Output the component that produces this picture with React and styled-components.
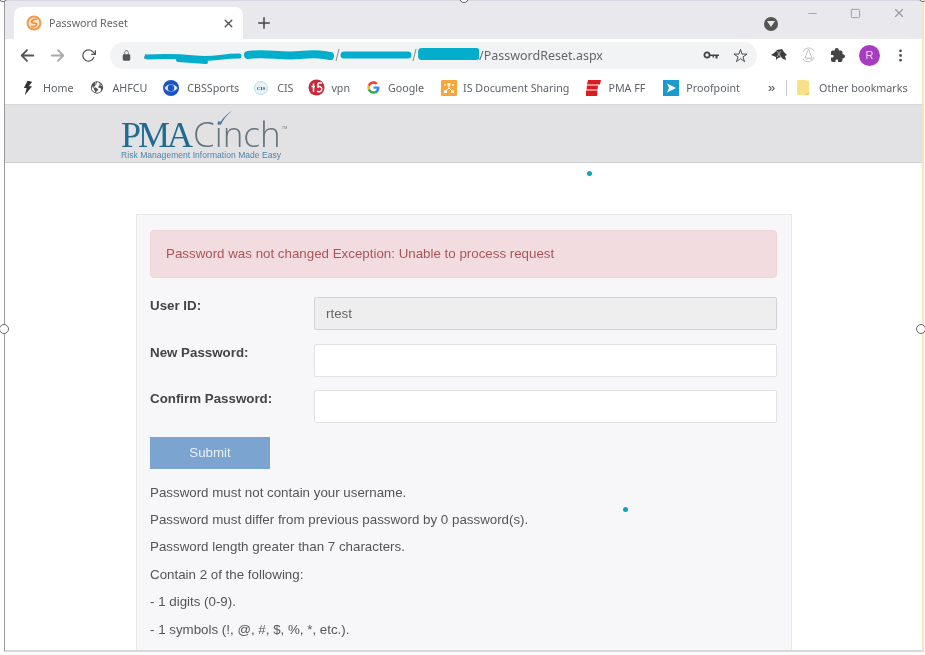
import React from "react";
import styled, { createGlobalStyle } from "styled-components";
import { IoArrowBack, IoArrowForward, IoClose, IoLockClosed, IoStarOutline, IoExtensionPuzzle, IoEllipsisVertical, IoEarth } from "react-icons/io5";
import { FiPlus, FiMinus, FiSquare, FiX, FiRotateCw } from "react-icons/fi";

const GlobalStyle = createGlobalStyle`
  html, body {
    margin: 0;
    padding: 0;
    height: 655px;
    overflow: hidden;
    background: #ffffff;
  }
  #root {
    height: 655px;
  }
`;

const bookmarks = [
  { label: "Home", icon: <BoltIcon />, gap: 10, width: 10, after: 17 },
  { label: "AHFCU", icon: <IoEarth size={15} color="#555" />, gap: 8, width: 14, after: 16 },
  { label: "CBSSports", icon: <CbsIcon />, gap: 8, width: 16, after: 15 },
  { label: "CIS", icon: <CisIcon />, gap: 9, width: 14, after: 15 },
  { label: "vpn", icon: <F5Icon />, gap: 6, width: 17, after: 17 },
  { label: "Google", icon: <GoogleIcon />, gap: 8, width: 13, after: 17 },
  { label: "IS Document Sharing", icon: <SharingIcon />, gap: 6, width: 16, after: 17 },
  { label: "PMA FF", icon: <EspnIcon />, gap: 7, width: 15, after: 18 },
  { label: "Proofpoint", icon: <ProofpointIcon />, gap: 7, width: 16, after: 16 },
];

const rules = [
  "Password must not contain your username.",
  "Password must differ from previous password by 0 password(s).",
  "Password length greater than 7 characters.",
  "Contain 2 of the following:",
  "- 1 digits (0-9).",
  "- 1 symbols (!, @, #, $, %, *, etc.).",
];

export default function App() {
  return (
    <>
      <GlobalStyle />
      <Capture>
        <Window>
          <TabStrip>
            <Tab>
              <SyncIcon />
              <TabTitle>Password Reset</TabTitle>
              <IoClose size={15} color="#555" />
            </Tab>
            <NewTab>
              <FiPlus size={18} color="#444" />
            </NewTab>
            <Spacer />
            <ProfileDrop>
              <svg width="8" height="6" viewBox="0 0 8 6"><path d="M0 0h8L4 6z" fill="#e8e8ed" /></svg>
            </ProfileDrop>
            <WindowControls>
              <FiMinus size={13} color="#aaa" />
              <FiSquare size={11} color="#999" />
              <FiX size={14} color="#999" />
            </WindowControls>
          </TabStrip>
          <Toolbar>
            <NavButtons>
              <IoArrowBack size={19} color="#555" />
              <IoArrowForward size={19} color="#aaa" />
              <FiRotateCw size={15} color="#555" />
            </NavButtons>
            <Omnibox>
              <IoLockClosed size={11} color="#555" />
              <Address>
                <Scribble />
                <UrlPath>/PasswordReset.aspx</UrlPath>
              </Address>
              <KeyIcon />
              <IoStarOutline size={15} color="#444" />
            </Omnibox>
            <Extensions>
              <TurtleIcon />
              <PenIcon />
              <IoExtensionPuzzle size={16} color="#444" />
              <Avatar>R</Avatar>
              <IoEllipsisVertical size={15} color="#555" />
            </Extensions>
          </Toolbar>
          <BookmarkBar>
            {bookmarks.map((b) => (
              <Bookmark key={b.label} $gap={b.gap} $after={b.after}>
                <BookmarkIcon $width={b.width}>{b.icon}</BookmarkIcon>
                {b.label}
              </Bookmark>
            ))}
            <Overflow>»</Overflow>
            <BarDivider />
            <Bookmark $gap={10} $after={0}>
              <FolderIcon />
              Other bookmarks
            </Bookmark>
          </BookmarkBar>
          <SiteHeader>
            <Logo>
              <LogoWords>
                <LogoPma>PMA</LogoPma>
                <LogoCinch>Cinch</LogoCinch>
                <LogoTm>TM</LogoTm>
                <LogoCheck />
              </LogoWords>
              <LogoTagline>Risk Management Information Made Easy</LogoTagline>
            </Logo>
          </SiteHeader>
          <Content>
            <Panel>
              <Alert>Password was not changed Exception: Unable to process request</Alert>
              <FieldRow>
                <FieldLabel>User ID:</FieldLabel>
                <FieldInput value="rtest" readOnly $disabled />
              </FieldRow>
              <FieldRow>
                <FieldLabel>New Password:</FieldLabel>
                <FieldInput type="password" readOnly />
              </FieldRow>
              <FieldRow>
                <FieldLabel>Confirm Password:</FieldLabel>
                <FieldInput type="password" readOnly />
              </FieldRow>
              <SubmitButton>Submit</SubmitButton>
              <Rules>
                {rules.map((r) => (
                  <Rule key={r}>{r}</Rule>
                ))}
              </Rules>
            </Panel>
          </Content>
        </Window>
        <Handle $x={4} $y={329} />
        <Handle $x={921} $y={329} />
        <Handle $x={464} $y={-2} />
        <Handle $x={3} $y={-3} />
        <Handle $x={923} $y={-3} />
        <Dot $x={589} $y={173} />
        <Dot $x={625} $y={509} />
      </Capture>
    </>
  );
}

function BoltIcon() {
  return (
    <svg width="11" height="16" viewBox="0 0 11 16">
      <path d="M5 0L1 8h3L2 16l8-10H6.500L10 1z" fill="#333" />
    </svg>
  );
}

function SyncIcon() {
  return (
    <svg width="16" height="16" viewBox="0 0 16 16">
      <circle cx="8" cy="8" r="7.5" fill="#f59a4c" />
      <circle cx="8" cy="8" r="5.4" fill="#fde6d2" />
      <path d="M11 4.6C8.5 3.8 5 5 5.6 7.2c.5 1.7 4.6 0 5 1.8.4 1.9-3 3.2-5.6 2.2" fill="none" stroke="#f08a35" strokeWidth="1.6" />
    </svg>
  );
}

function KeyIcon() {
  return (
    <svg width="16" height="10" viewBox="0 0 16 10" fill="none">
      <circle cx="4" cy="5" r="2.6" stroke="#444" strokeWidth="1.8" />
      <path d="M6.500 4.500H16v1.500h-1.500V8.500H12.500V6H11v1.500H9.500V6h-3z" fill="#444" />
    </svg>
  );
}

function CbsIcon() {
  return (
    <svg width="16" height="16" viewBox="0 0 16 16">
      <circle cx="8" cy="8" r="8" fill="#1b55c4" />
      <path d="M1.500 8C4 3.400 12 3.400 14.500 8 12 12.600 4 12.600 1.500 8z" fill="#dfe8fa" />
      <circle cx="8" cy="8" r="3.200" fill="#1b55c4" />
    </svg>
  );
}

function CisIcon() {
  return (
    <svg width="14" height="14" viewBox="0 0 14 14">
      <circle cx="7" cy="7" r="6.500" fill="#e8f3f7" stroke="#b4dbe8" />
      <text x="7" y="9" fontSize="5" fontFamily="Liberation Serif, serif" fontWeight="700" textAnchor="middle" fill="#345">CIS</text>
    </svg>
  );
}

function F5Icon() {
  return (
    <svg width="17" height="17" viewBox="0 0 17 17">
      <circle cx="8.500" cy="8.500" r="8" fill="#c8283a" />
      <path d="M3.500 7.500h3.500M5.500 4.500v8.500M10 4h4M10 4v4c2-1 3.800 0 3.800 2.300s-2.500 3-4.800 2" fill="none" stroke="#fff" strokeWidth="1.500" />
    </svg>
  );
}

function GoogleIcon() {
  return (
    <svg width="13" height="13" viewBox="0 0 48 48">
      <path fill="#4285F4" d="M46 24.500c0-1.600-.1-3.100-.4-4.500H24v9h12.400c-.5 2.900-2.200 5.300-4.600 6.900v5.700h7.400C43.500 37.600 46 31.600 46 24.500z" />
      <path fill="#34A853" d="M24 47c6.200 0 11.400-2 15.200-5.500l-7.400-5.700c-2 1.400-4.700 2.200-7.800 2.200-6 0-11.100-4-12.900-9.500H3.500v5.900C7.300 41.900 15 47 24 47z" />
      <path fill="#FBBC05" d="M11.100 28.500c-.5-1.400-.7-2.900-.7-4.500s.3-3.100.7-4.500v-5.900H3.500C2 16.700 1 20.200 1 24s1 7.300 2.500 10.400l7.600-5.900z" />
      <path fill="#EA4335" d="M24 10c3.400 0 6.400 1.200 8.800 3.400l6.600-6.600C35.400 3.100 30.200 1 24 1 15 1 7.300 6.100 3.500 13.600l7.600 5.900C12.900 14 18 10 24 10z" />
    </svg>
  );
}

function SharingIcon() {
  return (
    <svg width="16" height="16" viewBox="0 0 16 16">
      <rect width="16" height="16" rx="1" fill="#f7a63c" />
      <path d="M8 4v4M4 12L8 8l4 4" fill="none" stroke="#fff" strokeWidth="1" />
      <rect x="6.500" y="3" width="3" height="2.500" fill="#fff" />
      <rect x="3" y="10.500" width="3" height="2.500" fill="#fff" />
      <rect x="10" y="10.500" width="3" height="2.500" fill="#fff" />
      <rect x="3" y="4" width="2" height="2" fill="#fde0b0" />
      <rect x="11" y="4" width="2" height="2" fill="#fde0b0" />
    </svg>
  );
}

function EspnIcon() {
  return (
    <svg width="15" height="16" viewBox="0 0 15 16">
      <path d="M2 0h13l-1 4.500H1zM1 5.500h11l-.5 4H.5zM0 10.500h11.500L11 16H0z" fill="#dd1a22" />
    </svg>
  );
}

function ProofpointIcon() {
  return (
    <svg width="16" height="16" viewBox="0 0 16 16">
      <rect width="16" height="16" fill="#1a9ad0" />
      <path d="M4 3.500l9 4.500-9 4.500 2-4.500z" fill="#fff" />
    </svg>
  );
}

function FolderIcon() {
  return (
    <svg width="12" height="15" viewBox="0 0 12 15">
      <path d="M1 0h7l4 1v13l-1 1H1l-1-1V1z" fill="#fbe08a" />
      <path d="M9 15l3-3v2l-1 1z" fill="#e8c560" />
    </svg>
  );
}

function TurtleIcon() {
  return (
    <svg width="16" height="14" viewBox="0 0 16 14">
      <path d="M0 7l3-2 3-3 5-1 2 3 3 3-2 1 1 4-3-1-2-2-3 1-2 2V9z" fill="#3d3d3d" />
      <path d="M6 3l4 6M10 3L6 9" stroke="#ddd" strokeWidth=".7" />
    </svg>
  );
}

function PenIcon() {
  return (
    <svg width="15" height="18" viewBox="0 0 15 18" fill="none" stroke="#c4c4c4" strokeWidth="1">
      <path d="M2 6a6 6 0 0 1 11-1M13 11a6 6 0 0 1-11 2" />
      <path d="M7.500 3L4 12h7zM5 14c2-2 4-2 6 0" />
    </svg>
  );
}

function Scribble() {
  return (
    <svg width="335" height="20" viewBox="0 0 335 20">
      <path d="M0 14l2-5M192 16l3-12M269 16l3-12" stroke="#888" strokeWidth="1" />
      <g fill="none" stroke="#02aecb" strokeLinecap="round">
        <path d="M3 12c20-1 28-1 48 1s25-2 44-2" strokeWidth="5" />
        <path d="M34 15l28 2" strokeWidth="4" />
        <path d="M104 10c20-3 30 2 52 0s20 0 30 1" strokeWidth="8" />
        <path d="M200 10h64" strokeWidth="7" />
        <path d="M278 7h54M278 11h54" strokeWidth="8" />
      </g>
    </svg>
  );
}

function LogoCheck() {
  return (
    <CheckMark width="16" height="16" viewBox="0 0 22 22">
      <path d="M1 15l4 6C9 12 14 6 21 1 14 5 9 10 5 16z" fill="#3f7fa6" />
    </CheckMark>
  );
}

const Capture = styled.div`
  position: relative;
  width: 925px;
  height: 655px;
  overflow: hidden;
  background: #ffffff;
  filter: blur(0.5px);
`;

const Window = styled.div`
  display: flex;
  flex-direction: column;
  box-sizing: border-box;
  width: 920px;
  height: 652px;
  margin-left: 4px;
  border-left: 1px solid #9a9a9a;
  border-right: 2px solid #f5e6bd;
  border-bottom: 2px solid #d8d8da;
  font-family: "Liberation Sans", Arial, sans-serif;
`;

const TabStrip = styled.div`
  display: flex;
  align-items: flex-end;
  flex: 0 0 39px;
  padding-left: 9px;
  background: #e8e8ed;
  border-top: 1px solid #d4d6e2;
  box-sizing: border-box;
`;

const Tab = styled.div`
  display: flex;
  align-items: center;
  width: 229px;
  height: 32px;
  padding: 0 7px 0 12px;
  box-sizing: border-box;
  background: #ffffff;
  border-radius: 8px 8px 0 0;
`;

const TabTitle = styled.span`
  flex: 1;
  margin-left: 7px;
  font-family: "Noto Sans", sans-serif;
  font-size: 10.7px;
  color: #666;
`;

const NewTab = styled.div`
  display: flex;
  align-items: center;
  height: 32px;
  margin-left: 12px;
`;

const Spacer = styled.div`
  flex: 1;
`;

const ProfileDrop = styled.div`
  display: flex;
  align-items: center;
  justify-content: center;
  width: 14px;
  height: 14px;
  margin: 0 0 8px;
  border-radius: 50%;
  background: #555;
`;

const WindowControls = styled.div`
  display: flex;
  align-items: center;
  gap: 31px;
  align-self: flex-start;
  margin: 5px 16px 0 28px;
`;

const Toolbar = styled.div`
  display: flex;
  align-items: center;
  flex: 0 0 32px;
  background: #ffffff;
`;

const NavButtons = styled.div`
  display: flex;
  align-items: center;
  gap: 11px;
  padding-left: 13px;
  width: 105px;
  box-sizing: border-box;

  svg:last-child {
    margin-left: 3px;
  }
`;

const Omnibox = styled.div`
  display: flex;
  align-items: center;
  width: 647px;
  height: 27px;
  padding: 0 9px 0 11px;
  box-sizing: border-box;
  background: #f1f3f4;
  border-radius: 14px;
  gap: 14px;
`;

const Address = styled.div`
  display: flex;
  align-items: center;
  flex: 1;
  margin-left: -2px;
`;

const UrlPath = styled.span`
  font-family: "Noto Sans", sans-serif;
  font-size: 12.5px;
  color: #666;
`;

const Extensions = styled.div`
  display: flex;
  align-items: center;
  gap: 14px;
  padding-left: 14px;

  svg:last-child {
    margin-left: -1px;
  }
`;

const Avatar = styled.div`
  display: flex;
  align-items: center;
  justify-content: center;
  width: 21px;
  height: 21px;
  border-radius: 50%;
  background: #a63cc0;
  color: #f0d8f5;
  font-size: 11px;
  margin-left: -1px;
`;

const BookmarkBar = styled.div`
  display: flex;
  align-items: center;
  flex: 0 0 34px;
  padding-left: 18px;
  background: #ffffff;
  border-bottom: 1px solid #d8d8da;
  box-sizing: border-box;
`;

const Bookmark = styled.div`
  display: flex;
  align-items: center;
  gap: ${(p) => p.$gap}px;
  margin-right: ${(p) => p.$after}px;
  font-family: "Noto Sans", sans-serif;
  font-size: 10.7px;
  color: #5f6368;
  white-space: nowrap;
`;

const BookmarkIcon = styled.span`
  display: flex;
  align-items: center;
  justify-content: center;
  width: ${(p) => p.$width}px;
`;

const Overflow = styled.span`
  margin-left: 12px;
  font-size: 13px;
  color: #444;
`;

const BarDivider = styled.span`
  width: 1px;
  height: 16px;
  margin: 0 10px 0 11px;
  background: #ccc;
`;

const SiteHeader = styled.div`
  flex: 0 0 58px;
  padding-left: 116px;
  background: #e2e2e4;
  border-bottom: 1px solid #cfcfd2;
  box-sizing: border-box;
`;

const Logo = styled.div`
  display: flex;
  flex-direction: column;
  width: 175px;
  padding-top: 13px;
`;

const LogoWords = styled.div`
  position: relative;
  display: flex;
  align-items: baseline;
  height: 32px;
`;

const LogoPma = styled.span`
  font-family: "Liberation Serif", serif;
  font-size: 36px;
  line-height: 32px;
  letter-spacing: -3px;
  color: #1f6b92;
`;

const LogoCinch = styled.span`
  margin-left: 3px;
  font-family: "Open Sans", sans-serif;
  font-size: 35px;
  line-height: 32px;
  font-weight: 300;
  color: #66747c;
`;

const LogoTm = styled.span`
  align-self: flex-start;
  margin: 7px 0 0 1px;
  font-size: 4px;
  color: #777;
`;

const CheckMark = styled.svg`
  position: absolute;
  left: 96px;
  top: -8px;
`;

const LogoTagline = styled.div`
  font-size: 8.5px;
  line-height: 10px;
  letter-spacing: 0.05px;
  white-space: nowrap;
  color: #4a86ad;
`;

const Content = styled.div`
  flex: 1;
  min-height: 0;
  padding: 51px 0 0 131px;
  background: #ffffff;
`;

const Panel = styled.div`
  box-sizing: border-box;
  width: 656px;
  height: 100%;
  padding: 15px 14px 0 13px;
  background: #f7f6f9;
  border: 1px solid #e8e8e8;
  border-bottom: 0;
`;

const Alert = styled.div`
  box-sizing: border-box;
  height: 48px;
  padding: 0 15px;
  margin-bottom: 19px;
  line-height: 46px;
  font-size: 13.33px;
  color: #a9555a;
  background: #f3dcdf;
  border: 1px solid #f0d5d8;
  border-radius: 4px;
`;

const FieldRow = styled.div`
  display: flex;
  align-items: flex-start;
  margin-bottom: 13.5px;
`;

const FieldLabel = styled.label`
  flex: 0 0 164px;
  padding-top: 1px;
  font-size: 13.33px;
  line-height: 16px;
  font-weight: 700;
  color: #444;
`;

const FieldInput = styled.input`
  box-sizing: border-box;
  width: 463px;
  height: 33px;
  padding: 0 11px;
  font-family: inherit;
  font-size: 13.33px;
  color: #666;
  background: ${(p) => (p.$disabled ? "#eeeeef" : "#ffffff")};
  border: 1px solid ${(p) => (p.$disabled ? "#d2d2d4" : "#e2e2e4")};
  border-radius: 2px;
  outline: none;
`;

const SubmitButton = styled.button`
  display: block;
  width: 120px;
  height: 32px;
  margin-top: 1px;
  font-family: inherit;
  font-size: 13.33px;
  color: #e8eef6;
  background: #7ba5d0;
  border: 0;
`;

const Rules = styled.div`
  margin-top: 10px;
`;

const Rule = styled.div`
  font-size: 13.33px;
  line-height: 27.400px;
  color: #555;
`;

const Handle = styled.span`
  position: absolute;
  left: ${(p) => p.$x - 5}px;
  top: ${(p) => p.$y - 5}px;
  width: 8px;
  height: 8px;
  background: #ffffff;
  border: 1px solid #666;
  border-radius: 50%;
`;

const Dot = styled.span`
  position: absolute;
  left: ${(p) => p.$x - 2}px;
  top: ${(p) => p.$y - 2}px;
  width: 5px;
  height: 5px;
  background: #0aa5c4;
  border-radius: 50%;
`;
